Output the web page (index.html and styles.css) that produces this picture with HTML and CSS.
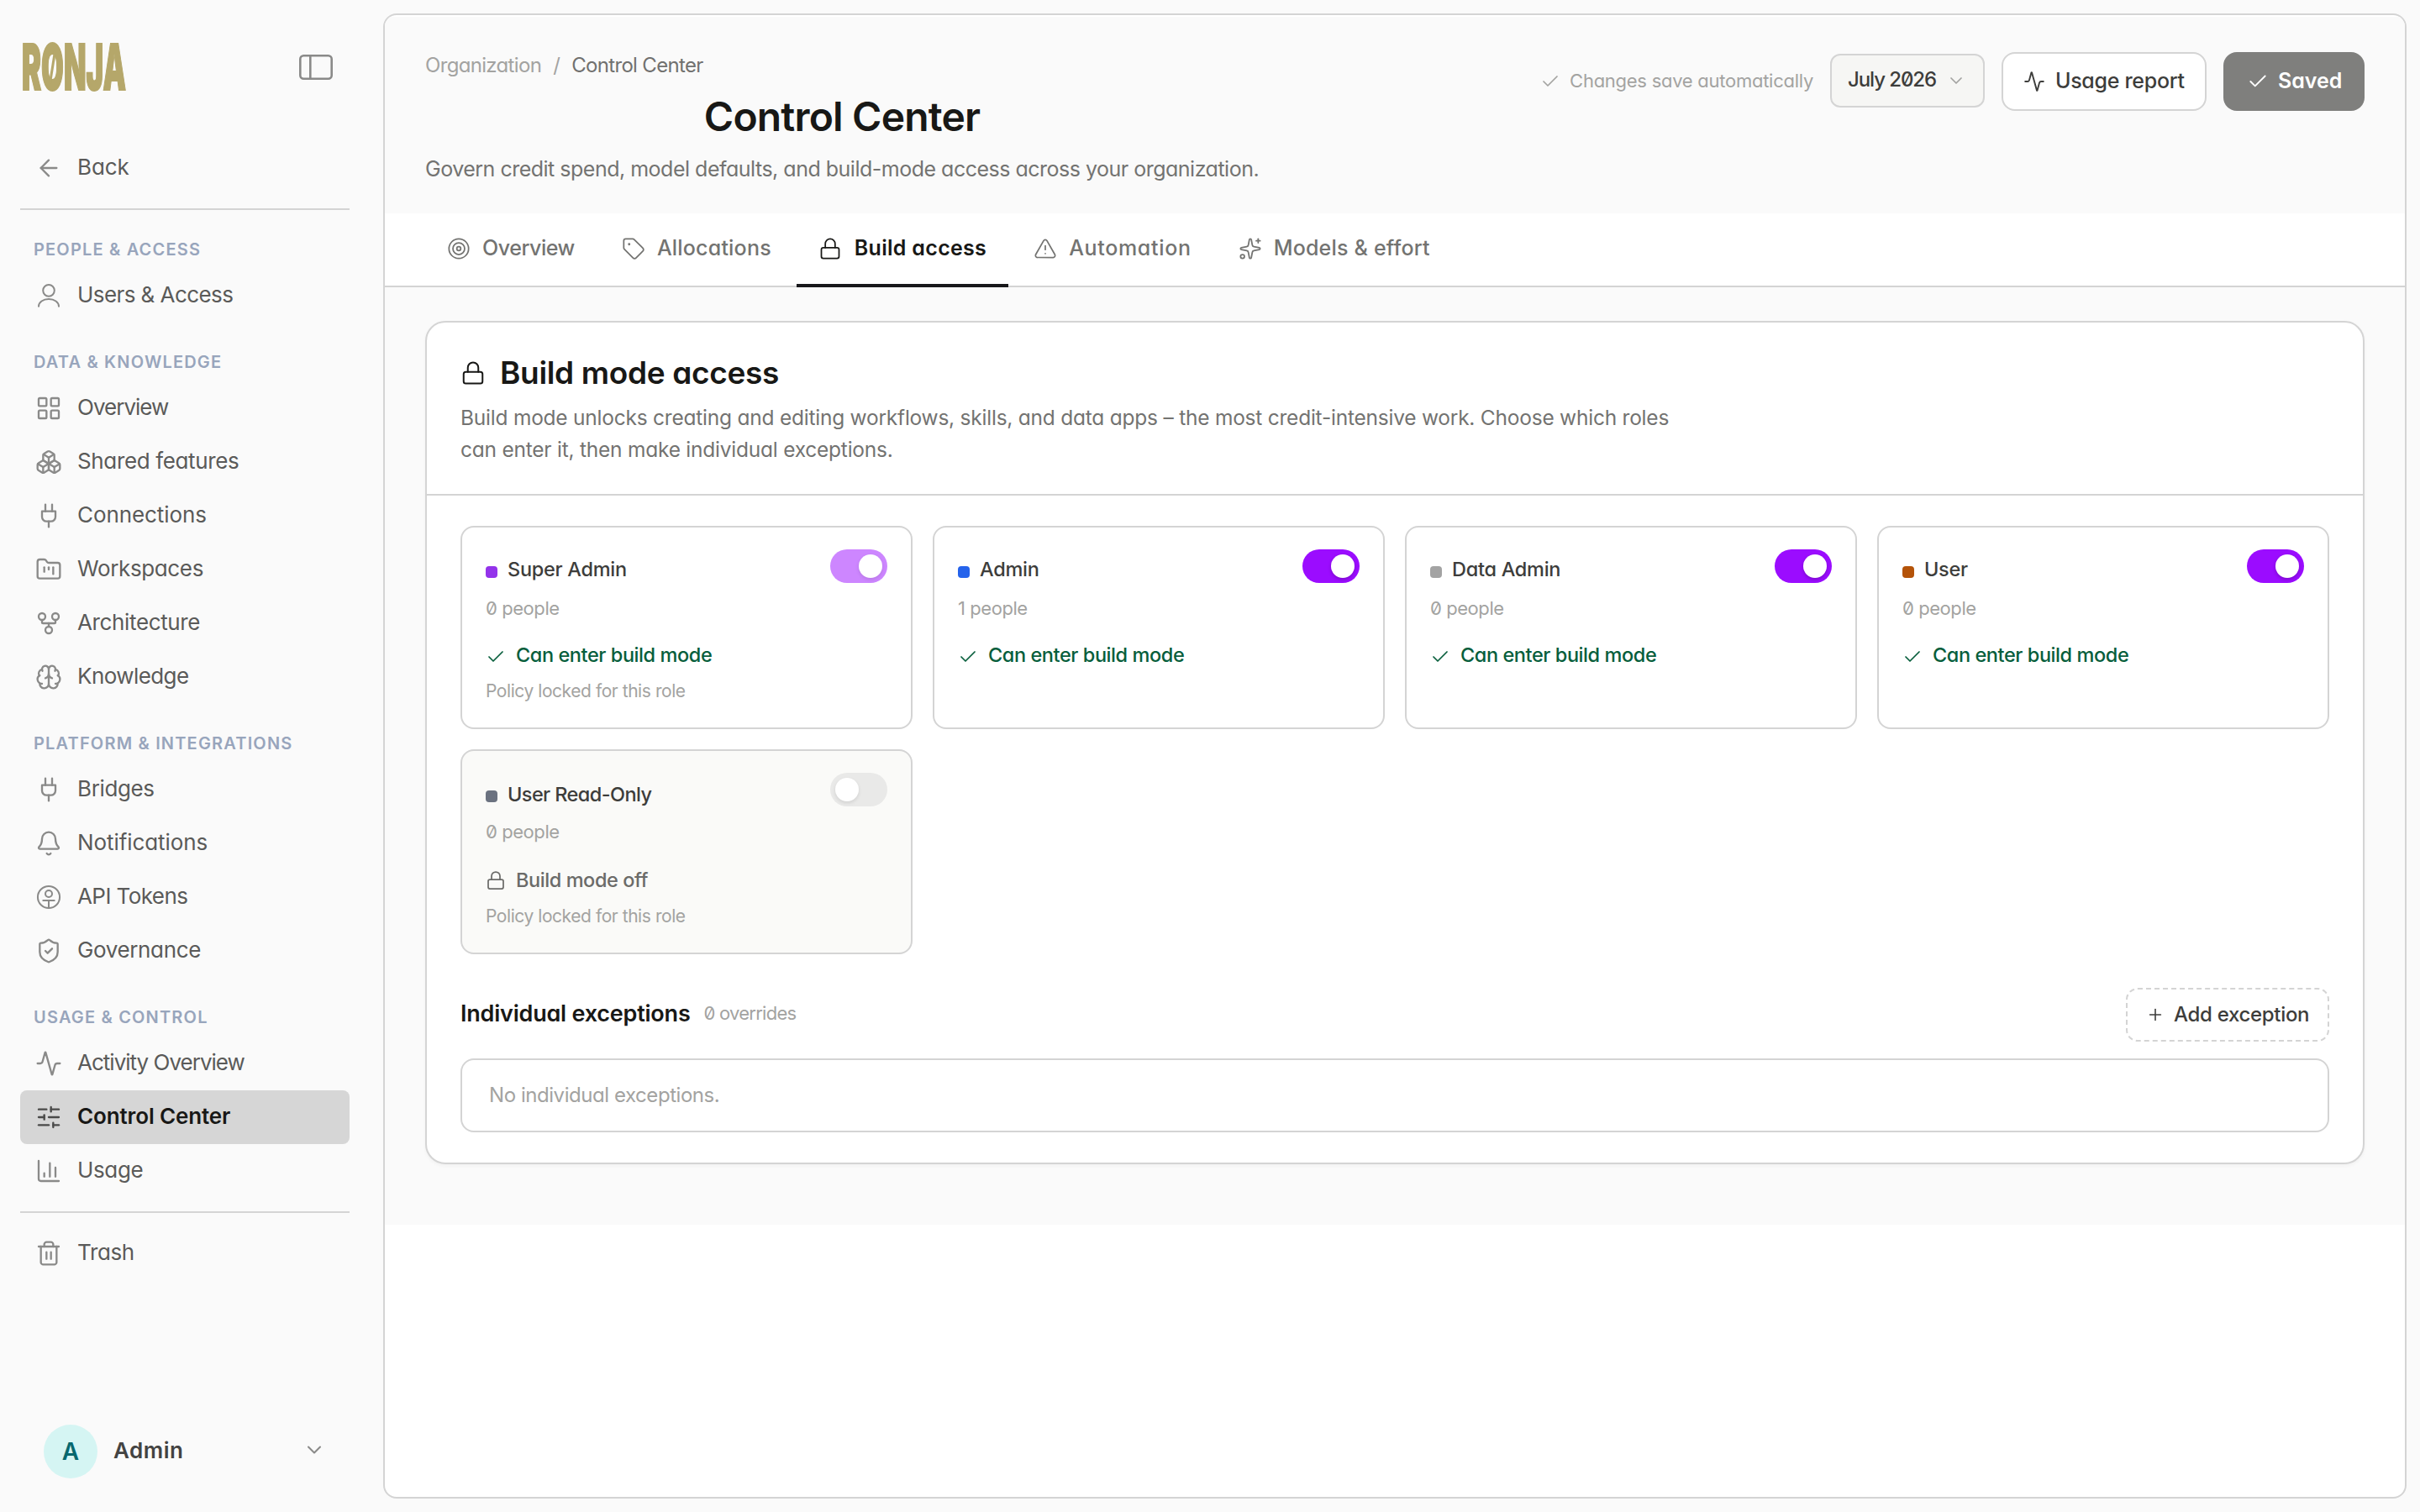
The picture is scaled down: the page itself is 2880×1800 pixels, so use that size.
FILE: index.html
```
<!DOCTYPE html>
<html lang="en">
<head>
    <meta charset="UTF-8">
    <title>Control Center - RONJA</title>
    <meta name="viewport" content="width=device-width, initial-scale=1.0">

    <link rel="stylesheet" href="styles.css">
</head>
<body>

<svg class="sprite" xmlns="http://www.w3.org/2000/svg">
    <symbol id="i-panel" viewBox="0 0 40 30"><rect x="1.3" y="1.3" width="37.4" height="27.4" rx="4"/><path d="M13.3 1.3v27.4"/></symbol>
    <symbol id="i-back" viewBox="0 0 24 24"><path d="m12 19-7-7 7-7"/><path d="M19 12H5"/></symbol>
    <symbol id="i-user" viewBox="0 0 24 24"><circle cx="12" cy="7.4" r="5.1"/><path d="M3 21.6c0-3.7 4-6.6 9-6.6s9 2.9 9 6.6"/></symbol>
    <symbol id="i-grid" viewBox="0 0 24 24"><rect x="3" y="3" width="7" height="7" rx="1"/><rect x="14" y="3" width="7" height="7" rx="1"/><rect x="14" y="14" width="7" height="7" rx="1"/><rect x="3" y="14" width="7" height="7" rx="1"/></symbol>
    <symbol id="i-boxes" viewBox="0 0 24 24"><path d="M2.97 12.92A2 2 0 0 0 2 14.63v3.24a2 2 0 0 0 .97 1.71l3 1.8a2 2 0 0 0 2.06 0L12 19v-5.5l-5-3-4.03 2.42Z"/><path d="m7 16.5-4.74-2.85"/><path d="m7 16.5 5-3"/><path d="M7 16.5v5.17"/><path d="M12 13.5V19l3.97 2.38a2 2 0 0 0 2.06 0l3-1.8a2 2 0 0 0 .97-1.71v-3.24a2 2 0 0 0-.97-1.71L17 10.5l-5 3Z"/><path d="m17 16.5-5-3"/><path d="m17 16.5 4.74-2.85"/><path d="M17 16.5v5.17"/><path d="M7.97 4.42A2 2 0 0 0 7 6.13v4.37l5 3 5-3V6.13a2 2 0 0 0-.97-1.71l-3-1.8a2 2 0 0 0-2.06 0l-3 1.8Z"/><path d="M12 8 7.26 5.15"/><path d="m12 8 4.74-2.85"/><path d="M12 13.5V8"/></symbol>
    <symbol id="i-plug" viewBox="0 0 24 24"><path d="M12 22v-5"/><path d="M9 8V2"/><path d="M15 8V2"/><path d="M18 8v5a4 4 0 0 1-4 4h-4a4 4 0 0 1-4-4V8Z"/></symbol>
    <symbol id="i-folder" viewBox="0 0 24 24"><path d="M4 20h16a2 2 0 0 0 2-2V8a2 2 0 0 0-2-2h-7.93a2 2 0 0 1-1.66-.9l-.82-1.2A2 2 0 0 0 7.93 3H4a2 2 0 0 0-2 2v13c0 1.1.9 2 2 2Z"/><path d="M8 10v4"/><path d="M12 10v2"/><path d="M16 10v6"/></symbol>
    <symbol id="i-fork" viewBox="0 0 24 24"><circle cx="12" cy="18" r="3"/><circle cx="6" cy="6" r="3"/><circle cx="18" cy="6" r="3"/><path d="M18 9v2c0 .6-.4 1-1 1H7c-.6 0-1-.4-1-1V9"/><path d="M12 12v3"/></symbol>
    <symbol id="i-brain" viewBox="0 0 24 24"><path d="M12 18V5"/><path d="M15 13a4.17 4.17 0 0 1-3-4 4.17 4.17 0 0 1-3 4"/><path d="M17.598 6.5A3 3 0 1 0 12 5a3 3 0 1 0-5.598 1.5"/><path d="M17.997 5.125a4 4 0 0 1 2.526 5.77"/><path d="M18 18a4 4 0 0 0 2-7.464"/><path d="M19.967 17.483A4 4 0 1 1 12 18a4 4 0 1 1-7.967-.517"/><path d="M6 18a4 4 0 0 1-2-7.464"/><path d="M6.003 5.125a4 4 0 0 0-2.526 5.77"/></symbol>
    <symbol id="i-bell" viewBox="0 0 24 24"><path d="M10.268 21a2 2 0 0 0 3.464 0"/><path d="M3.262 15.326A1 1 0 0 0 4 17h16a1 1 0 0 0 .74-1.673C19.41 13.956 18 12.499 18 8A6 6 0 0 0 6 8c0 4.499-1.411 5.956-2.738 7.326"/></symbol>
    <symbol id="i-token" viewBox="0 0 24 24"><circle cx="12" cy="12" r="9.8"/><circle cx="12" cy="9" r="3"/><path d="M7 15h10"/><path d="M12 15v6.5"/></symbol>
    <symbol id="i-shield" viewBox="0 0 24 24"><path d="M20 13c0 5-3.5 7.5-7.66 8.95a1 1 0 0 1-.67-.01C7.5 20.5 4 18 4 13V6a1 1 0 0 1 1-1c2 0 4.5-1.2 6.24-2.72a1.17 1.17 0 0 1 1.52 0C14.51 3.81 17 5 19 5a1 1 0 0 1 1 1z"/><path d="m9 12 2 2 4-4"/></symbol>
    <symbol id="i-activity" viewBox="0 0 24 24"><path d="M22 12h-2.48a2 2 0 0 0-1.93 1.46l-2.35 8.36a.25.25 0 0 1-.48 0L9.24 2.18a.25.25 0 0 0-.48 0l-2.35 8.36A2 2 0 0 1 4.49 12H2"/></symbol>
    <symbol id="i-sliders" viewBox="0 0 24 24"><path d="M10 5H3"/><path d="M12 19H3"/><path d="M14 3v4"/><path d="M16 17v4"/><path d="M21 12h-9"/><path d="M21 19h-5"/><path d="M21 5h-7"/><path d="M8 10v4"/><path d="M8 12H3"/></symbol>
    <symbol id="i-chart" viewBox="0 0 24 24"><path d="M3 3v16a2 2 0 0 0 2 2h16"/><path d="M18 17V9"/><path d="M13 17V5"/><path d="M8 17v-3"/></symbol>
    <symbol id="i-trash" viewBox="0 0 24 24"><path d="M3 6h18"/><path d="M19 6v14c0 1-1 2-2 2H7c-1 0-2-1-2-2V6"/><path d="M8 6V4c0-1 1-2 2-2h4c1 0 2 1 2 2v2"/><path d="M10 11v6"/><path d="M14 11v6"/></symbol>
    <symbol id="i-chevron" viewBox="0 0 24 24"><path d="m6 9 6 6 6-6"/></symbol>
    <symbol id="i-target" viewBox="0 0 24 24"><circle cx="12" cy="12" r="10"/><circle cx="12" cy="12" r="6"/><circle cx="12" cy="12" r="2"/></symbol>
    <symbol id="i-tag" viewBox="0 0 24 24"><path d="M12.586 2.586A2 2 0 0 0 11.172 2H4a2 2 0 0 0-2 2v7.172a2 2 0 0 0 .586 1.414l8.704 8.704a2.426 2.426 0 0 0 3.42 0l6.58-6.58a2.426 2.426 0 0 0 0-3.42z"/><circle cx="7.5" cy="7.5" r=".5" fill="currentColor"/></symbol>
    <symbol id="i-lock" viewBox="0 0 24 24"><rect x="3" y="11" width="18" height="11" rx="2"/><path d="M7 11V7a5 5 0 0 1 10 0v4"/></symbol>
    <symbol id="i-alert" viewBox="0 0 24 24"><path d="m21.73 18-8-14a2 2 0 0 0-3.48 0l-8 14A2 2 0 0 0 4 21h16a2 2 0 0 0 1.73-3"/><path d="M12 9v4"/><path d="M12 17h.01"/></symbol>
    <symbol id="i-sparkles" viewBox="0 0 24 24"><path d="M11.017 2.814a1 1 0 0 1 1.966 0l1.051 5.558a2 2 0 0 0 1.594 1.594l5.558 1.051a1 1 0 0 1 0 1.966l-5.558 1.051a2 2 0 0 0-1.594 1.594l-1.051 5.558a1 1 0 0 1-1.966 0l-1.051-5.558a2 2 0 0 0-1.594-1.594l-5.558-1.051a1 1 0 0 1 0-1.966l5.558-1.051a2 2 0 0 0 1.594-1.594z"/><path d="M20 2v4"/><path d="M22 4h-4"/><circle cx="4" cy="20" r="2"/></symbol>
    <symbol id="i-check" viewBox="0 0 24 24"><path d="M20 6 9 17l-5-5"/></symbol>
    <symbol id="i-plus" viewBox="0 0 24 24"><path d="M5 12h14"/><path d="M12 5v14"/></symbol>
</svg>

<div class="app">
    <aside class="sidebar">
        <div class="brand">
            <svg class="logo" viewBox="0 0 126 60"><text x="1" y="57.3" textLength="124" lengthAdjust="spacingAndGlyphs">RONJA</text><path d="M34.5 49 40.5 11"/></svg>
            <svg class="icon icon-panel"><use href="#i-panel"/></svg>
        </div>

        <a class="nav-item"><svg class="icon"><use href="#i-back"/></svg><span class="loose">Back</span></a>
        <hr>

        <div class="nav-group">
            <h4>People &amp; Access</h4>
            <a class="nav-item"><svg class="icon thin"><use href="#i-user"/></svg><span class="snug">Users &amp; Access</span></a>
        </div>
        <div class="nav-group">
            <h4>Data &amp; Knowledge</h4>
            <a class="nav-item"><svg class="icon"><use href="#i-grid"/></svg><span class="tight">Overview</span></a>
            <a class="nav-item"><svg class="icon"><use href="#i-boxes"/></svg><span>Shared features</span></a>
            <a class="nav-item"><svg class="icon"><use href="#i-plug"/></svg><span class="loose">Connections</span></a>
            <a class="nav-item"><svg class="icon"><use href="#i-folder"/></svg><span>Workspaces</span></a>
            <a class="nav-item"><svg class="icon"><use href="#i-fork"/></svg><span>Architecture</span></a>
            <a class="nav-item"><svg class="icon"><use href="#i-brain"/></svg><span class="snug">Knowledge</span></a>
        </div>
        <div class="nav-group">
            <h4>Platform &amp; Integrations</h4>
            <a class="nav-item"><svg class="icon"><use href="#i-plug"/></svg><span>Bridges</span></a>
            <a class="nav-item"><svg class="icon"><use href="#i-bell"/></svg><span class="loose">Notifications</span></a>
            <a class="nav-item"><svg class="icon thin"><use href="#i-token"/></svg><span class="snug">API Tokens</span></a>
            <a class="nav-item"><svg class="icon"><use href="#i-shield"/></svg><span>Governance</span></a>
        </div>
        <div class="nav-group">
            <h4>Usage &amp; Control</h4>
            <a class="nav-item"><svg class="icon"><use href="#i-activity"/></svg><span class="tight">Activity Overview</span></a>
            <a class="nav-item active"><svg class="icon"><use href="#i-sliders"/></svg><span>Control Center</span></a>
            <a class="nav-item"><svg class="icon"><use href="#i-chart"/></svg><span>Usage</span></a>
        </div>
        <hr>
        <a class="nav-item"><svg class="icon"><use href="#i-trash"/></svg><span>Trash</span></a>

        <div class="account">
            <div class="avatar">A</div>
            <span>Admin</span>
            <svg class="icon"><use href="#i-chevron"/></svg>
        </div>
    </aside>

    <main class="panel">
        <header class="page-header">
            <div class="page-title">
                <div class="breadcrumb"><span>Organization</span><span>/</span><span class="current">Control Center</span></div>
                <h1>Control Center</h1>
                <p>Govern credit spend, model defaults, and build-mode access across your organization.</p>
            </div>
            <div class="actions">
                <div class="autosave"><svg class="icon"><use href="#i-check"/></svg><span>Changes save automatically</span></div>
                <button class="month"><span>July 2026</span><svg class="icon"><use href="#i-chevron"/></svg></button>
                <button class="report"><svg class="icon"><use href="#i-activity"/></svg><span>Usage report</span></button>
                <button class="saved"><svg class="icon"><use href="#i-check"/></svg><span>Saved</span></button>
            </div>
        </header>

        <nav class="tabs">
            <a class="tab tab-overview"><svg class="icon"><use href="#i-target"/></svg><span>Overview</span></a>
            <a class="tab"><svg class="icon"><use href="#i-tag"/></svg><span>Allocations</span></a>
            <a class="tab active"><svg class="icon"><use href="#i-lock"/></svg><span>Build access</span></a>
            <a class="tab tab-automation"><svg class="icon"><use href="#i-alert"/></svg><span>Automation</span></a>
            <a class="tab"><svg class="icon"><use href="#i-sparkles"/></svg><span>Models &amp; effort</span></a>
        </nav>

        <div class="page-body">
            <section class="card">
                <div class="card-header">
                    <h2><svg class="icon"><use href="#i-lock"/></svg><span>Build mode access</span></h2>
                    <p>Build mode unlocks creating and editing workflows, skills, and data apps – the most credit-intensive work. Choose which roles can enter it, then make individual exceptions.</p>
                </div>

                <div class="card-body">
                    <div class="roles">
                        <div class="role">
                            <div class="role-head">
                                <div class="role-name"><i class="swatch purple"></i><span>Super Admin</span></div>
                                <div class="toggle on locked"></div>
                            </div>
                            <div class="people">0 people</div>
                            <div class="status"><svg class="icon"><use href="#i-check"/></svg><span>Can enter build mode</span></div>
                            <div class="policy">Policy locked for this role</div>
                        </div>
                        <div class="role">
                            <div class="role-head">
                                <div class="role-name"><i class="swatch blue"></i><span>Admin</span></div>
                                <div class="toggle on"></div>
                            </div>
                            <div class="people">1 people</div>
                            <div class="status"><svg class="icon"><use href="#i-check"/></svg><span>Can enter build mode</span></div>
                        </div>
                        <div class="role">
                            <div class="role-head">
                                <div class="role-name"><i class="swatch gray"></i><span>Data Admin</span></div>
                                <div class="toggle on"></div>
                            </div>
                            <div class="people">0 people</div>
                            <div class="status"><svg class="icon"><use href="#i-check"/></svg><span>Can enter build mode</span></div>
                        </div>
                        <div class="role">
                            <div class="role-head">
                                <div class="role-name"><i class="swatch orange"></i><span>User</span></div>
                                <div class="toggle on"></div>
                            </div>
                            <div class="people">0 people</div>
                            <div class="status"><svg class="icon"><use href="#i-check"/></svg><span>Can enter build mode</span></div>
                        </div>
                        <div class="role off">
                            <div class="role-head">
                                <div class="role-name"><i class="swatch slate"></i><span>User Read-Only</span></div>
                                <div class="toggle"></div>
                            </div>
                            <div class="people">0 people</div>
                            <div class="status"><svg class="icon"><use href="#i-lock"/></svg><span>Build mode off</span></div>
                            <div class="policy">Policy locked for this role</div>
                        </div>
                    </div>

                    <div class="exceptions-head">
                        <h3>Individual exceptions</h3>
                        <span class="count">0 overrides</span>
                        <button class="add"><svg class="icon"><use href="#i-plus"/></svg><span>Add exception</span></button>
                    </div>
                    <div class="empty">No individual exceptions.</div>
                </div>
            </section>
        </div>
    </main>
</div>

</body>
</html>
```
FILE: styles.css
```
* {
    box-sizing: border-box;
}

body {
    margin: 0;
    background: #fafafa;
    color: #181816;
    font-family: Inter, "Liberation Sans", sans-serif;
    font-feature-settings: "cv11", "zero";
    -webkit-font-smoothing: antialiased;
}

h1, h2, h3, h4, p {
    margin: 0;
}

button {
    font: inherit;
    font-feature-settings: inherit;
    color: inherit;
    background: none;
}

.sprite {
    display: none;
}

.icon {
    width: 32px;
    height: 32px;
    flex: none;
    fill: none;
    stroke: currentColor;
    stroke-width: 1.75;
    stroke-linecap: round;
    stroke-linejoin: round;
}

.icon.thin {
    stroke-width: 1.5;
}

.app {
    display: flex;
    height: 1800px;
}

/* sidebar */

.sidebar {
    width: 440px;
    flex: none;
    display: flex;
    flex-direction: column;
    padding: 0 24px 40px;
}

.brand {
    height: 168px;
    display: flex;
    justify-content: space-between;
    align-items: flex-start;
    padding: 50px 20px 0 1px;
}

.logo {
    width: 126px;
    height: 60px;
    overflow: visible;
}

.logo text {
    font-size: 75px;
    font-weight: 900;
    fill: #b5a76a;
    stroke: #b5a76a;
    stroke-width: 2;
}

.logo path {
    stroke: #b5a76a;
    stroke-width: 3;
}

.icon-panel {
    width: 40px;
    height: 30px;
    margin-top: 15px;
    color: #8a8a89;
    stroke-width: 2.6;
}

.sidebar hr {
    width: 100%;
    height: 2px;
    margin: 16px 0;
    border: 0;
    background: #d4d4d4;
}

.nav-group {
    margin-bottom: 16px;
}

.nav-group:has(+ hr) {
    margin-bottom: 0;
}

.nav-group h4 {
    padding: 17px 16px 9px;
    font-size: 20px;
    line-height: 28px;
    font-weight: 600;
    letter-spacing: 0.059em;
    text-transform: uppercase;
    color: #98a5bc;
}

.nav-item {
    height: 64px;
    flex: none;
    display: flex;
    align-items: center;
    gap: 18px;
    padding: 0 18px;
    border-radius: 8px;
    font-size: 26px;
    letter-spacing: -0.014em;
    color: #5a5a59;
}

.nav-item span {
    margin-top: -3px;
}

.nav-item .snug {
    letter-spacing: -0.022em;
}

.nav-item .tight {
    letter-spacing: -0.038em;
}

.nav-item .loose {
    letter-spacing: -0.003em;
}

.nav-item .icon {
    color: #8a8a89;
}

.nav-item.active {
    background: #d6d6d6;
    color: #181816;
    font-weight: 600;
    letter-spacing: -0.005em;
}

.nav-item.active .icon {
    color: #4a4a49;
}

.account {
    display: flex;
    align-items: center;
    gap: 19px;
    margin-top: auto;
    padding: 0 28px;
    font-size: 26px;
    font-weight: 600;
    letter-spacing: 0.02em;
    color: #434342;
}

.avatar {
    width: 64px;
    height: 64px;
    border-radius: 50%;
    background: #d5f5f3;
    color: #07686e;
    font-size: 28px;
    line-height: 64px;
    letter-spacing: 0;
    text-align: center;
}

.account .icon {
    width: 28px;
    height: 28px;
    margin: 0 0 4px auto;
    color: #8a8a89;
}

.account span {
    margin-top: -3px;
}

/* main panel */

.panel {
    flex: 1;
    margin: 16px;
    padding-top: 2px;
    border: 2px solid #d4d4d4;
    border-radius: 16px;
    background: #fff;
    overflow: hidden;
}

.page-header {
    height: 234px;
    display: flex;
    justify-content: space-between;
    align-items: flex-start;
    padding: 41px 48px 0;
    background: #fafafa;
}

.breadcrumb {
    display: flex;
    gap: 14px;
    padding-top: 1px;
    font-size: 24px;
    line-height: 32px;
    letter-spacing: -0.028em;
    color: #a3a3a1;
}

.breadcrumb .current {
    color: #71716f;
}

.page-title h1 {
    margin-top: 17px;
    font-size: 48px;
    line-height: 56px;
    font-weight: 600;
    letter-spacing: -0.017em;
    text-align: center;
}

.page-title p {
    margin-top: 15px;
    font-size: 25px;
    line-height: 38px;
    letter-spacing: -0.02em;
    color: #737371;
}

.actions {
    display: flex;
    align-items: center;
    gap: 20px;
    margin-top: 1px;
}

.actions span {
    margin-top: -3px;
}

.autosave {
    display: flex;
    align-items: center;
    gap: 11px;
    font-size: 22px;
    letter-spacing: -0.012em;
    color: #a3a3a1;
}

.autosave .icon, .month .icon {
    width: 24px;
    height: 24px;
}

.actions button {
    height: 70px;
    display: flex;
    align-items: center;
    border: 2px solid #d4d4d4;
    border-radius: 16px;
    font-size: 25px;
    font-weight: 500;
    color: #3d3d3b;
}

.actions .month {
    width: 184px;
    height: 64px;
    margin-bottom: 2px;
    justify-content: space-between;
    padding: 0 20px 0 19px;
    border-radius: 12px;
    background: #f6f6f4;
    font-size: 24px;
    letter-spacing: -0.0454em;
}

.month .icon {
    color: #a3a3a1;
}

.actions .report {
    width: 244px;
    gap: 12px;
    padding: 0 0 0 24px;
    background: #fff;
    letter-spacing: -0.012em;
}

.report .icon, .saved .icon {
    width: 26px;
    height: 26px;
}

.actions .saved {
    width: 168px;
    gap: 11px;
    padding: 0 0 0 28px;
    border: 0;
    background: #7f7f7d;
    color: #fff;
    font-weight: 600;
    letter-spacing: -0.002em;
}

.tabs {
    height: 88px;
    display: flex;
    gap: 4px;
    padding-left: 48px;
    background: #fff;
    border-bottom: 2px solid #d4d4d4;
}

.tab {
    height: 88px;
    display: flex;
    align-items: center;
    gap: 14px;
    padding: 0 26px;
    border-bottom: 4px solid transparent;
    font-size: 25px;
    font-weight: 500;
    letter-spacing: 0.008em;
    color: #737371;
    white-space: nowrap;
}

.tab span {
    margin-top: -3px;
}

.tab .icon {
    width: 28px;
    height: 28px;
    stroke-width: 1.5;
}

.tab-overview {
    letter-spacing: -0.018em;
}

.tab-automation {
    letter-spacing: 0.027em;
}

.tab.active {
    gap: 15px;
    border-color: #18181b;
    color: #181816;
    font-weight: 600;
    letter-spacing: 0.012em;
}

.page-body {
    padding: 40px 48px 72px;
    background: #fafafa;
}

.card {
    border: 2px solid #d4d4d4;
    border-radius: 24px;
    background: #fff;
    box-shadow: 0 2px 4px rgba(0, 0, 0, 0.04);
}

.card-header {
    padding: 38px 40px 34px;
    border-bottom: 2px solid #d4d4d4;
}

.card-header h2 {
    display: flex;
    align-items: center;
    gap: 17px;
    font-size: 37px;
    line-height: 44px;
    font-weight: 600;
    letter-spacing: -0.009em;
}

.card-header .icon {
    width: 30px;
    height: 30px;
    stroke-width: 1.6;
}

.card-header p {
    width: 1450px;
    margin-top: 12px;
    font-size: 24.5px;
    line-height: 38px;
    letter-spacing: -0.0094em;
    color: #737371;
}

.card-body {
    padding: 36px 40px;
}

.roles {
    display: grid;
    grid-template-columns: repeat(4, 1fr);
    grid-template-rows: 242px 243.5px;
    gap: 24px;
}

.role {
    padding: 26px 28px;
    border: 2px solid #d4d4d4;
    border-radius: 16px;
    background: #fff;
}

.role.off {
    background: #fafaf8;
}

.role-head {
    display: flex;
    justify-content: space-between;
    align-items: flex-start;
}

.role-name {
    display: flex;
    align-items: center;
    gap: 12px;
    padding-top: 8px;
    font-size: 23.5px;
    line-height: 32px;
    font-weight: 500;
    letter-spacing: -0.012em;
    color: #3d3d3b;
}

.off .role-name {
    padding-top: 10px;
    letter-spacing: -0.025em;
}

.swatch {
    width: 14px;
    height: 14px;
    margin-top: 6px;
    border-radius: 4px;
}

.off .swatch {
    margin-top: 4px;
}

.purple {
    background: #9333ea;
}

.blue {
    background: #2563eb;
}

.gray {
    background: #a3a3a3;
}

.orange {
    background: #b45309;
}

.slate {
    background: #6b7280;
}

.toggle {
    width: 68px;
    height: 40px;
    display: flex;
    align-items: center;
    padding: 0 6px;
    border-radius: 20px;
    background: #e9e9e8;
}

.toggle::before {
    content: "";
    width: 28px;
    height: 28px;
    border-radius: 50%;
    background: #fff;
    box-shadow: 0 2px 4px rgba(0, 0, 0, 0.2);
}

.toggle.on {
    justify-content: flex-end;
    background: #9b0cff;
}

.toggle.locked {
    background: #cd86ff;
}

.toggle.locked::before, .off .toggle::before {
    box-shadow: 0 2px 4px rgba(0, 0, 0, 0.1);
}

.people {
    margin-top: 16px;
    font-size: 22px;
    line-height: 28px;
    letter-spacing: -0.02em;
    color: #a3a3a1;
}

.off .people {
    margin-top: 14px;
}

.status {
    display: flex;
    align-items: center;
    gap: 12px;
    margin-top: 26px;
    font-size: 23.5px;
    line-height: 32px;
    font-weight: 500;
    letter-spacing: -0.018em;
    color: #075e3c;
}

.off .status {
    margin-top: 28px;
    color: #6b6b69;
}

.status .icon {
    width: 24px;
    height: 24px;
    margin-top: 4px;
}

.off .status .icon {
    margin-top: 0;
}

.policy {
    margin-top: 13px;
    font-size: 21px;
    line-height: 28px;
    letter-spacing: -0.021em;
    color: #a3a3a1;
}

.exceptions-head {
    display: flex;
    align-items: center;
    margin-top: 40.5px;
}

.exceptions-head h3 {
    margin-top: -3px;
    font-size: 27px;
    line-height: 36px;
    font-weight: 600;
    letter-spacing: -0.008em;
}

.count {
    margin: -4px 0 0 16px;
    font-size: 22px;
    letter-spacing: -0.034em;
    color: #a3a3a1;
}

.add {
    width: 242px;
    height: 64px;
    display: flex;
    align-items: center;
    gap: 11px;
    margin-left: auto;
    padding: 0 0 0 22px;
    border: 2px dashed #d4d4d4;
    border-radius: 14px;
    font-size: 24px;
    font-weight: 500;
    letter-spacing: -0.013em;
    color: #3d3d3b;
}

.add span {
    margin-top: -2px;
}

.add .icon {
    width: 22px;
    height: 22px;
}

.empty {
    height: 88px;
    margin-top: 20px;
    padding: 0 32px;
    border: 2px solid #d4d4d4;
    border-radius: 16px;
    font-size: 24px;
    line-height: 83px;
    letter-spacing: -0.0185em;
    color: #a3a3a1;
}
```
